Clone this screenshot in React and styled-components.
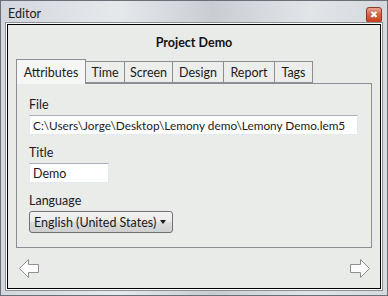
import React from "react";
import styled, { createGlobalStyle } from "styled-components";

const Global = createGlobalStyle`
  html, body { margin: 0; padding: 0; background: #d9dde2; }
  body { font-family: Lato, "Noto Sans", sans-serif; }
`;

const Window = styled.div`
  width: 388px;
  height: 296px;
  box-sizing: border-box;
  border: 1px solid #6b7078;
  background: linear-gradient(90deg, #d3d7dc 0%, #e6e9ec 30%, #c9cdd2 55%, #e2e5e8 80%, #d5d9dd 100%);
  display: flex;
  flex-direction: column;
  padding: 0 5px 5px 5px;
`;

const TitleBar = styled.div`
  height: 23px;
  display: flex;
  align-items: center;
  justify-content: space-between;
  padding: 0 0 0 2px;
`;

const Caption = styled.span`
  font-size: 12.5px;
  color: #1b1b1b;
  margin-top: 2px;
`;

const CloseButton = styled.div`
  width: 16px;
  height: 16px;
  margin-top: 4px;
  box-sizing: border-box;
  border: 1px solid #8a3b2c;
  border-radius: 3px;
  background: linear-gradient(180deg, #eba48f 0%, #d9603f 50%, #c7411f 100%);
  display: flex;
  align-items: center;
  justify-content: center;
  color: #fff;
  font-size: 10px;
  font-weight: bold;
  line-height: 1;
  font-family: "DejaVu Sans", sans-serif;
  text-shadow: 0 0 1px #5a1a0c;
`;

const Client = styled.div`
  flex: 1;
  box-sizing: border-box;
  border: 1px solid #000;
  box-shadow: 0 0 0 1px #ffffff, 0 0 0 2px #8b9097;
  margin: 0 1px 1px 1px;
  background: #e9ebe9;
  display: flex;
  flex-direction: column;
  padding: 0 8px;
`;

const Heading = styled.div`
  font-size: 12.5px;
  font-weight: bold;
  color: #111;
  text-align: center;
  padding: 10px 0 0;
  box-sizing: border-box;
  height: 33px;
`;

const TabStrip = styled.div`
  display: flex;
  align-items: flex-end;
  height: 25px;
  position: relative;
  z-index: 1;
`;

const Tab = styled.div`
  box-sizing: border-box;
  width: ${({ $w }) => $w}px;
  height: ${({ $active }) => ($active ? "25px" : "22px")};
  margin-bottom: ${({ $active }) => ($active ? "-1px" : "0")};
  border: 1px solid #8c8e94;
  border-bottom: ${({ $active }) => ($active ? "none" : "1px solid #8c8e94")};
  margin-left: -1px;
  background: ${({ $active }) => ($active ? "#f5f6f5" : "#eceeec")};
  font-size: 12.5px;
  color: #1a1a1a;
  display: flex;
  align-items: center;
  justify-content: center;
  padding-top: ${({ $active }) => ($active ? "0" : "1px")};
  &:first-child { margin-left: 0; }
`;

const Panel = styled.div`
  box-sizing: border-box;
  height: 165px;
  border: 1px solid #8c8e94;
  background: #eaecea;
  padding: 13px 12px 0;
  display: flex;
  flex-direction: column;
  align-items: flex-start;
`;

const Label = styled.div`
  font-size: 12.5px;
  color: #1a1a1a;
  height: 16px;
  margin-bottom: 2px;
`;

const TextBox = styled.div`
  box-sizing: border-box;
  width: ${({ $w }) => $w}px;
  height: 20px;
  background: #fff;
  border: 1px solid #e3e9ef;
  border-top-color: #abadb3;
  font-size: ${({ $fs }) => $fs || 12.5}px;
  color: #1a1a1a;
  padding: 0 3px;
  display: flex;
  align-items: center;
  white-space: nowrap;
  overflow: hidden;
  margin-bottom: 10px;
`;

const Select = styled.div`
  box-sizing: border-box;
  width: 144px;
  height: 22px;
  border: 1px solid #707070;
  border-radius: 3px;
  background: linear-gradient(180deg, #f3f3f3 0%, #ebebeb 50%, #dddddd 52%, #cfcfcf 100%);
  font-size: 12.5px;
  color: #1a1a1a;
  white-space: nowrap;
  display: flex;
  align-items: center;
  justify-content: space-between;
  padding: 0 6px 0 4px;
`;

const Caret = styled.span`
  width: 0;
  height: 0;
  border-left: 3.5px solid transparent;
  border-right: 3.5px solid transparent;
  border-top: 4px solid #1a1a1a;
`;

const NavRow = styled.div`
  display: flex;
  justify-content: space-between;
  padding: 10px 1px 0 2px;
`;

const Arrow = ({ flip }) => (
  <svg width="22" height="22" viewBox="0 0 22 22" style={flip ? { transform: "scaleX(-1)" } : undefined}>
    <polygon
      points="1.5,10.5 10.5,1.5 10.5,6.5 20.5,6.5 20.5,14.5 10.5,14.5 10.5,19.5"
      fill="#fdfdfd"
      stroke="#8f9190"
      strokeWidth="1"
      strokeLinejoin="round"
    />
  </svg>
);

const tabs = [
  ["Attributes", 70],
  ["Time", 40],
  ["Screen", 49],
  ["Design", 52],
  ["Report", 52],
  ["Tags", 39],
];

export default function App() {
  return (
    <>
      <Global />
      <Window>
        <TitleBar>
          <Caption>Editor</Caption>
          <CloseButton>✖</CloseButton>
        </TitleBar>
        <Client>
          <Heading>Project Demo</Heading>
          <TabStrip>
            {tabs.map(([t, w], i) => (
              <Tab key={t} $w={w} $active={i === 0}>{t}</Tab>
            ))}
          </TabStrip>
          <Panel>
            <Label>File</Label>
            <TextBox $w={329} $fs={11.8}>C:\Users\Jorge\Desktop\Lemony demo\Lemony Demo.lem5</TextBox>
            <Label>Title</Label>
            <TextBox $w={80}>Demo</TextBox>
            <Label>Language</Label>
            <Select>
              English (United States)
              <Caret />
            </Select>
          </Panel>
          <NavRow>
            <Arrow />
            <Arrow flip />
          </NavRow>
        </Client>
      </Window>
    </>
  );
}
